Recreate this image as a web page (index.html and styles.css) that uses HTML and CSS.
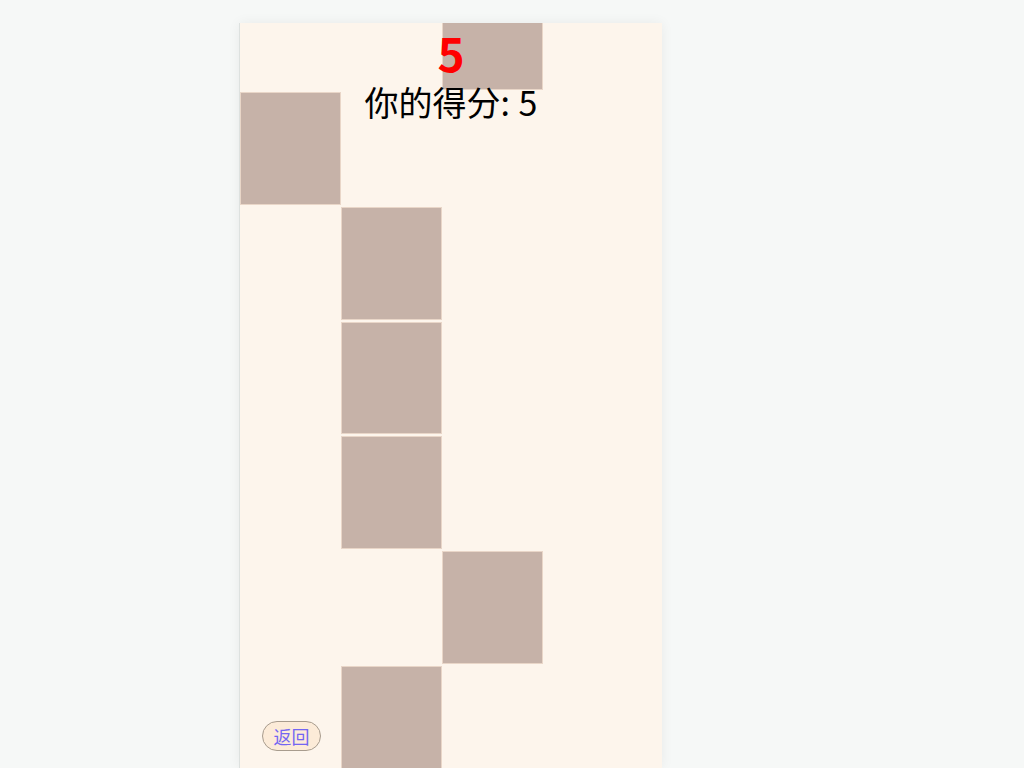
FILE: index.html
```html
<!DOCTYPE html>
<html lang="zh">
<head>
<meta charset="utf-8">
<title>别踩白块</title>
<link rel="stylesheet" href="styles.css">
</head>
<body>
<div class="stage">
  <div class="panel">
    <div class="board">
      <div class="row"><div class="cell"></div><div class="cell"></div><div class="cell tile"></div><div class="cell"></div></div>
      <div class="row"><div class="cell tile"></div><div class="cell"></div><div class="cell"></div><div class="cell"></div></div>
      <div class="row"><div class="cell"></div><div class="cell tile"></div><div class="cell"></div><div class="cell"></div></div>
      <div class="row"><div class="cell"></div><div class="cell tile"></div><div class="cell"></div><div class="cell"></div></div>
      <div class="row"><div class="cell"></div><div class="cell tile"></div><div class="cell"></div><div class="cell"></div></div>
      <div class="row"><div class="cell"></div><div class="cell"></div><div class="cell tile"></div><div class="cell"></div></div>
      <div class="row"><div class="cell"></div><div class="cell tile"></div><div class="cell"></div><div class="cell"></div></div>
    </div>
    <div class="hud">
      <div class="score">5</div>
      <div class="label">你的得分: 5</div>
    </div>
    <button class="back">返回</button>
  </div>
</div>
</body>
</html>
```

FILE: styles.css
```css
html, body {
  margin: 0;
  padding: 0;
  height: 100%;
  overflow: hidden;
}
body {
  background: #f6f8f7;
  font-family: "Noto Sans CJK SC", "Noto Sans", sans-serif;
}
.stage {
  padding-left: 239px;
  padding-top: 23px;
}
.panel {
  position: relative;
  width: 422px;
  height: 745px;
  background: #fdf5ec;
  border-left: 1px solid #dde1df;
  box-shadow: 0 0 12px rgba(0, 0, 0, 0.06);
  overflow: hidden;
}
.board {
  margin-top: -45.4px;
  display: flex;
  flex-direction: column;
}
.row {
  display: flex;
  height: 114.67px;
  flex: none;
}
.cell {
  width: 101px;
  height: 112.67px;
  box-sizing: border-box;
  flex: none;
}
.tile {
  background: #c6b2a8;
  border: 1px solid #e9d6c8;
}
.hud {
  position: absolute;
  left: 0;
  right: 0;
  top: 0;
  text-align: center;
  pointer-events: none;
}
.score {
  color: #ff0000;
  font-weight: 700;
  font-size: 46px;
  line-height: 50px;
  margin-top: 4px;
}
.label {
  color: #000;
  font-size: 34px;
  line-height: 40px;
  margin-top: 5px;
  word-spacing: 1px;
}
.back {
  position: absolute;
  left: 22px;
  bottom: 17px;
  width: 59px;
  height: 30px;
  padding: 0;
  border: 1px solid #a89c8e;
  border-radius: 15px;
  background: #fcebd8;
  color: #7466f2;
  font-family: "Noto Sans CJK SC", sans-serif;
  font-size: 18px;
  line-height: 28px;
}
```
